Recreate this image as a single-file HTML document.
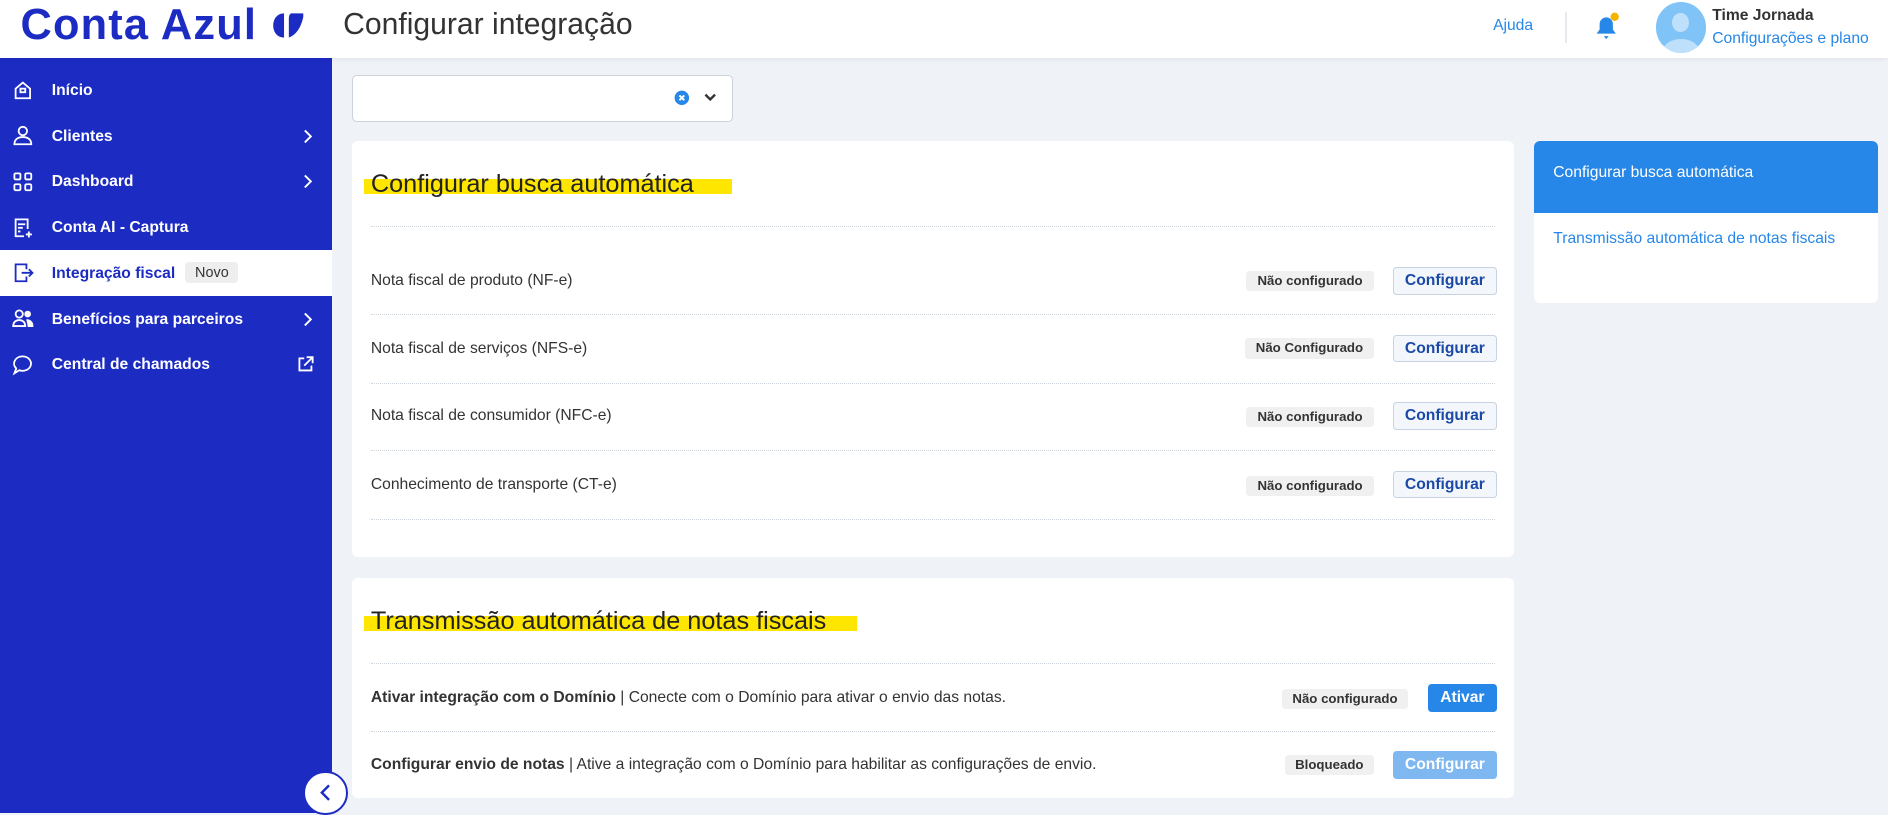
<!DOCTYPE html>
<html><head><meta charset="utf-8">
<style>
html{zoom:1.2041}
*{box-sizing:border-box;margin:0;padding:0}
body{width:1568px;height:675px;overflow:hidden;background:#eff2f7;font-family:"Liberation Sans",sans-serif;position:relative;color:#333}
.hdr{position:absolute;left:0;top:0;width:1568px;height:48px;background:#fff;box-shadow:0 1px 4px rgba(0,0,0,.08);z-index:2}
.logo{position:absolute;left:17px;top:1px;font-size:36px;font-weight:bold;color:#1c2bc2;letter-spacing:1px}
.title{position:absolute;left:285px;top:7px;font-size:25px;color:#333}
.side{position:absolute;left:0;top:48px;width:276px;height:627px;background:#1c2bc2}
.it{position:absolute;left:0;width:276px;height:38px;color:#fff;font-size:13px;font-weight:bold}
.it .t{position:absolute;left:43px;top:12px}
.it svg.ic{position:absolute;left:10px;top:10px}
.it svg.ch{position:absolute;left:249px;top:12px}
.act{background:#fff;color:#1c2bc2}
.novo{position:absolute;left:154px;top:10px;background:#eee;color:#333;font-weight:normal;font-size:12px;padding:2px 8px;border-radius:3px}
.card{position:absolute;background:#fff;border-radius:5px}
.sel{position:absolute;left:292px;top:62px;width:317px;height:39px;background:#fff;border:1px solid #ccd3dd;border-radius:4px}
h2{position:absolute;font-size:21px;font-weight:normal;color:#222;left:16px}
.hl{position:absolute;background:#ffe600;height:12px}
.dv{position:absolute;left:16px;width:934px;border-top:1px dotted #cfd5dd}
.row{position:absolute;left:16px;font-size:13px;color:#333}
.bd{position:absolute;height:17px;background:#f0f0f0;border-radius:3px;font-size:11px;font-weight:bold;color:#333;text-align:center;line-height:17px}
.bt{position:absolute;height:23px;border:1px solid #c8d2e0;background:#f3f6fa;border-radius:3px;color:#1b4aa6;font-weight:bold;font-size:13px;text-align:center;line-height:21px;left:865px;width:86px}
</style></head><body>
<div class="hdr">
 <div class="logo">Conta Azul</div>
 <svg style="position:absolute;left:226px;top:9px" width="28" height="24" viewBox="0 0 28 24"><path d="M10 2C4 2 1 7 1 12s3 10 9 10z" fill="#1c2bc2"/><path d="M16 2h10v3C24 14 20 20 14 22V6c0-2 1-4 2-4z" fill="#1c2bc2"/></svg>
 <div class="title">Configurar integração</div>
 <div style="position:absolute;left:1240px;top:14px;font-size:13px;color:#2687e8">Ajuda</div>
 <div style="position:absolute;left:1300px;top:10px;width:1px;height:26px;background:#e6e9ee"></div>
 <svg style="position:absolute;left:1323px;top:10px" width="24" height="24" viewBox="0 0 24 24"><path d="M3 18h16l-2.5-3.5V10a5.5 5.5 0 0 0-11 0v4.5z" fill="#2687e8"/><path d="M9 20h4l-2 2.5z" fill="#2687e8"/><circle cx="18" cy="4" r="3.5" fill="#f5b400"/></svg>
 <div style="position:absolute;left:1375px;top:2px;width:42px;height:42px;border-radius:50%;background:#7fc3f7;overflow:hidden"><div style="position:absolute;left:14px;top:9px;width:14px;height:16px;border-radius:50%;background:#bfe0fb"></div><div style="position:absolute;left:6px;top:30px;width:30px;height:20px;border-radius:50%;background:#bfe0fb"></div></div>
 <div style="position:absolute;left:1422px;top:6px;font-size:13px;font-weight:bold;color:#333">Time Jornada</div>
 <div style="position:absolute;left:1422px;top:25px;font-size:13px;color:#2687e8">Configurações e plano</div>
</div>
<div class="side">
 <div class="it" style="top:8px"><svg class="ic" width="18" height="18" viewBox="0 0 18 18" fill="none" stroke="#fff" stroke-width="1.5"><path d="M3 8l6-5 6 5v8H3z"/><rect x="7" y="8" width="4" height="3"/></svg><span class="t">Início</span></div>
 <div class="it" style="top:46px"><svg class="ic" width="18" height="18" viewBox="0 0 18 18" fill="none" stroke="#fff" stroke-width="1.5"><circle cx="9" cy="5" r="3.5"/><path d="M2 16c0-4 3-6 7-6s7 2 7 6z"/></svg><span class="t">Clientes</span><svg class="ch" width="12" height="14" viewBox="0 0 12 14" fill="none" stroke="#fff" stroke-width="1.6"><path d="M4 2l5 5-5 5"/></svg></div>
 <div class="it" style="top:84px"><svg class="ic" width="18" height="18" viewBox="0 0 18 18" fill="none" stroke="#fff" stroke-width="1.5"><rect x="2" y="2" width="5" height="5" rx="1"/><rect x="11" y="2" width="5" height="5" rx="1"/><rect x="2" y="11" width="5" height="5" rx="1"/><rect x="11" y="11" width="5" height="5" rx="1"/></svg><span class="t">Dashboard</span><svg class="ch" width="12" height="14" viewBox="0 0 12 14" fill="none" stroke="#fff" stroke-width="1.6"><path d="M4 2l5 5-5 5"/></svg></div>
 <div class="it" style="top:122px"><svg class="ic" width="18" height="18" viewBox="0 0 18 18" fill="none" stroke="#fff" stroke-width="1.5"><path d="M10 16H3V2h10v8"/><path d="M5 6h6M5 9h4M5 12h2M14 12v5M11.5 14.5h5"/></svg><span class="t">Conta AI - Captura</span></div>
 <div class="it act" style="top:160px"><svg class="ic" width="18" height="18" viewBox="0 0 18 18" fill="none" stroke="#1c2bc2" stroke-width="1.5"><path d="M12 6V2H3v14h9v-4"/><path d="M8 9h9M14 6l3 3-3 3"/></svg><span class="t">Integração fiscal</span><span class="novo">Novo</span></div>
 <div class="it" style="top:198px"><svg class="ic" width="18" height="18" viewBox="0 0 18 18" fill="none" stroke="#fff" stroke-width="1.5"><circle cx="6" cy="5" r="3"/><path d="M1 15c0-3 2-5 5-5s5 2 5 5z"/><circle cx="13" cy="5" r="2" fill="#fff"/><path d="M12 10c3 0 5 2 5 5h-4" fill="#fff"/></svg><span class="t">Benefícios para parceiros</span><svg class="ch" width="12" height="14" viewBox="0 0 12 14" fill="none" stroke="#fff" stroke-width="1.6"><path d="M4 2l5 5-5 5"/></svg></div>
 <div class="it" style="top:236px"><svg class="ic" width="18" height="18" viewBox="0 0 18 18" fill="none" stroke="#fff" stroke-width="1.5"><path d="M9 2a7 6 0 1 1-3 11.5L2 16l1.5-4A7 6 0 0 1 9 2z"/></svg><span class="t">Central de chamados</span><svg style="position:absolute;left:247px;top:12px" width="14" height="14" viewBox="0 0 14 14" fill="none" stroke="#fff" stroke-width="1.5"><path d="M6 2H2v10h10V8M8 1h5v5M13 1L6 8"/></svg></div>
</div>
<div style="position:absolute;left:252px;top:640px;width:37px;height:37px;border-radius:50%;background:#fff;border:2px solid #1c2bc2;z-index:3"><svg style="position:absolute;left:10px;top:9px" width="14" height="16" viewBox="0 0 14 16" fill="none" stroke="#1c2bc2" stroke-width="2"><path d="M10 2L4 8l6 6"/></svg></div>

<div class="sel"><svg style="position:absolute;left:267px;top:12px" width="13" height="13" viewBox="0 0 13 13"><circle cx="6.5" cy="6.5" r="6" fill="#2687e8"/><path d="M4.5 4.5l4 4M8.5 4.5l-4 4" stroke="#fff" stroke-width="1.6"/></svg><svg style="position:absolute;left:291px;top:13px" width="12" height="10" viewBox="0 0 12 10" fill="none" stroke="#333" stroke-width="2"><path d="M2 3l4 4 4-4"/></svg></div>

<div class="card" style="left:292px;top:117px;width:965px;height:346px">
 <div class="hl" style="left:10px;top:32px;width:306px"></div>
 <h2 style="top:24px">Configurar busca automática</h2>
 <div class="dv" style="top:71px"></div>
 <div class="row" style="top:109px">Nota fiscal de produto (NF-e)</div>
 <div class="bd" style="left:743px;top:108px;width:106px">Não configurado</div>
 <div class="bt" style="top:105px">Configurar</div>
 <div class="dv" style="top:144px"></div>
 <div class="row" style="top:165px">Nota fiscal de serviços (NFS-e)</div>
 <div class="bd" style="left:742px;top:164px;width:107px">Não Configurado</div>
 <div class="bt" style="top:161px">Configurar</div>
 <div class="dv" style="top:201px"></div>
 <div class="row" style="top:221px">Nota fiscal de consumidor (NFC-e)</div>
 <div class="bd" style="left:743px;top:221px;width:106px">Não configurado</div>
 <div class="bt" style="top:217px">Configurar</div>
 <div class="dv" style="top:257px"></div>
 <div class="row" style="top:278px">Conhecimento de transporte (CT-e)</div>
 <div class="bd" style="left:743px;top:278px;width:106px">Não configurado</div>
 <div class="bt" style="top:274px">Configurar</div>
 <div class="dv" style="top:314px"></div>
</div>

<div class="card" style="left:292px;top:480px;width:965px;height:183px">
 <div class="hl" style="left:10px;top:32px;width:410px"></div>
 <h2 style="top:24px">Transmissão automática de notas fiscais</h2>
 <div class="dv" style="top:71px"></div>
 <div class="row" style="top:92px"><b>Ativar integração com o Domínio</b> | Conecte com o Domínio para ativar o envio das notas.</div>
 <div class="bd" style="left:773px;top:92px;width:104px">Não configurado</div>
 <div class="bt" style="top:88px;left:894px;width:57px;background:#2687e8;border-color:#2687e8;color:#fff">Ativar</div>
 <div class="dv" style="top:127px"></div>
 <div class="row" style="top:148px"><b>Configurar envio de notas</b> | Ative a integração com o Domínio para habilitar as configurações de envio.</div>
 <div class="bd" style="left:775px;top:147px;width:74px">Bloqueado</div>
 <div class="bt" style="top:144px;background:#7fb8f0;border-color:#7fb8f0;color:#fff">Configurar</div>
</div>

<div class="card" style="left:1274px;top:117px;width:286px;height:135px;overflow:hidden">
 <div style="position:absolute;left:0;top:0;width:286px;height:60px;background:#2687e8;color:#fff;font-size:13px;padding:19px 16px">Configurar busca automática</div>
 <div style="position:absolute;left:16px;top:74px;font-size:13px;color:#2687e8">Transmissão automática de notas fiscais</div>
</div>
</body></html>
